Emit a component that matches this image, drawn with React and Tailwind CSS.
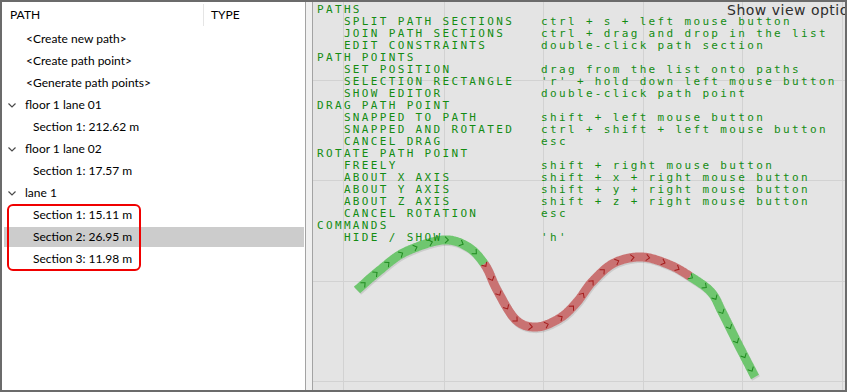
import React from "react";

const KEY_PTS = [
  [357, 290], [380, 270], [405, 252], [443, 240], [468, 247], [485, 265],
  [497, 290], [516, 320], [537, 327], [560, 318], [577, 302], [592, 282],
  [614, 263], [642, 257], [670, 265], [691, 277], [711, 292], [722, 312],
  [738, 344], [755, 377],
].map(([x, y]) => [x - 313, y - 2]);

function sampleCurve() {
  const n = KEY_PTS.length;
  const out = [];
  const steps = 24;
  for (let i = 0; i < n - 1; i++) {
    const p0 = KEY_PTS[Math.max(i - 1, 0)];
    const p1 = KEY_PTS[i];
    const p2 = KEY_PTS[i + 1];
    const p3 = KEY_PTS[Math.min(i + 2, n - 1)];
    for (let s = 0; s <= steps; s++) {
      if (s === steps && i < n - 2) continue;
      const t = s / steps;
      const t2 = t * t;
      const t3 = t2 * t;
      const f = (a, b, c, d) =>
        0.5 * (2 * b + (-a + c) * t + (2 * a - 5 * b + 4 * c - d) * t2 + (-a + 3 * b - 3 * c + d) * t3);
      out.push({ x: f(p0[0], p1[0], p2[0], p3[0]), y: f(p0[1], p1[1], p2[1], p3[1]), seg: i });
    }
  }
  return out;
}

function colorOf(seg) {
  return seg >= 5 && seg < 15 ? "red" : "green";
}

function Curve() {
  const pts = sampleCurve();
  const runs = [];
  let cur = null;
  pts.forEach((p, idx) => {
    const c = colorOf(p.seg);
    if (!cur || cur.c !== c) {
      const prev = idx > 0 ? pts[idx - 1] : null;
      cur = { c, pts: prev ? [prev] : [] };
      runs.push(cur);
    }
    cur.pts.push(p);
  });
  const chevrons = [];
  let acc = 8;
  for (let i = 1; i < pts.length; i++) {
    const a = pts[i - 1];
    const b = pts[i];
    const d = Math.hypot(b.x - a.x, b.y - a.y);
    acc -= d;
    if (acc <= 0) {
      acc += 16;
      const ang = (Math.atan2(b.y - a.y, b.x - a.x) * 180) / Math.PI;
      chevrons.push({ x: b.x, y: b.y, ang, c: colorOf(b.seg) });
    }
  }
  const toStr = (arr) => arr.map((p) => `${p.x.toFixed(1)},${p.y.toFixed(1)}`).join(" ");
  return (
    <g>
      <polyline points={toStr(pts.map((p) => ({ x: p.x + 1, y: p.y + 1.5 })))} fill="none" stroke="rgba(0,0,0,0.10)" strokeWidth="9" />
      {runs.map((r, i) => (
        <polyline
          key={i}
          points={toStr(r.pts)}
          fill="none"
          stroke={r.c === "red" ? "#c97272" : "#6fc66f"}
          strokeWidth="9"
          strokeLinejoin="round"
        />
      ))}
      {chevrons.map((c, i) => (
        <path
          key={i}
          d="M-1.8,-3.2 L1.6,0 L-1.8,3.2"
          transform={`translate(${c.x.toFixed(1)},${c.y.toFixed(1)}) rotate(${c.ang.toFixed(1)})`}
          fill="none"
          stroke={c.c === "red" ? "#a51c1c" : "#1f8a1f"}
          strokeWidth="1"
        />
      ))}
    </g>
  );
}

const HELP = [
  ["PATHS"],
  ["   SPLIT PATH SECTIONS", "ctrl + s + left mouse button"],
  ["   JOIN PATH SECTIONS", "ctrl + drag and drop in the list"],
  ["   EDIT CONSTRAINTS", "double-click path section"],
  ["PATH POINTS"],
  ["   SET POSITION", "drag from the list onto paths"],
  ["   SELECTION RECTANGLE", "'r' + hold down left mouse button"],
  ["   SHOW EDITOR", "double-click path point"],
  ["DRAG PATH POINT"],
  ["   SNAPPED TO PATH", "shift + left mouse button"],
  ["   SNAPPED AND ROTATED", "ctrl + shift + left mouse button"],
  ["   CANCEL DRAG", "esc"],
  ["ROTATE PATH POINT"],
  ["   FREELY", "shift + right mouse button"],
  ["   ABOUT X AXIS", "shift + x + right mouse button"],
  ["   ABOUT Y AXIS", "shift + y + right mouse button"],
  ["   ABOUT Z AXIS", "shift + z + right mouse button"],
  ["   CANCEL ROTATION", "esc"],
  ["COMMANDS"],
  ["   HIDE / SHOW", "'h'"],
];

function Viewport() {
  const vx = [30, 131, 230, 330, 429, 529];
  const hy = [78, 178, 279, 379];
  const text = HELP.map(([a, b]) => (b ? a.padEnd(25, " ") + b : a)).join("\n");
  return (
    <div className="relative flex-1 bg-[#e4e4e4] overflow-hidden">
      <svg className="absolute inset-0" width="532" height="388">
        {vx.map((x) => (
          <line key={"v" + x} x1={x + 0.5} y1="0" x2={x + 0.5} y2="388" stroke="#d2d2d2" strokeWidth="1" />
        ))}
        {hy.map((y) => (
          <line key={"h" + y} x1="0" y1={y + 0.5} x2="532" y2={y + 0.5} stroke="#d2d2d2" strokeWidth="1" />
        ))}
        <Curve />
      </svg>
      <pre className="relative m-0 pl-[4px] pt-[2px] font-['DejaVu_Sans_Mono',monospace] text-[11px] leading-[12px] tracking-[2.34px] text-[#138c13] whitespace-pre">
        {text}
      </pre>
      <div className="absolute left-[414px] top-[0px] whitespace-nowrap font-['DejaVu_Sans',sans-serif] text-[14px] leading-[17px] tracking-[0.5px] text-[#2e2e2e]">
        Show view options
      </div>
    </div>
  );
}

function Chevron() {
  return (
    <svg width="8" height="5" viewBox="0 0 8 5" className="block">
      <path d="M0.5,0.5 L4,4 L7.5,0.5" fill="none" stroke="#4a4a4a" strokeWidth="1.2" />
    </svg>
  );
}

function Row({ indent, chevron, selected, children }) {
  return (
    <div className="h-[22px] flex items-center relative">
      {selected && <div className="absolute left-[2px] right-[1px] top-[1px] bottom-[1px] bg-[#cccccc]" />}
      {chevron && (
        <div className="absolute left-[6px] top-[9px]">
          <Chevron />
        </div>
      )}
      <div className="relative" style={{ paddingLeft: indent }}>
        <span className="whitespace-nowrap">{children}</span>
      </div>
    </div>
  );
}

function LeftPanel() {
  return (
    <div className="relative w-[303px] bg-white font-['Lato',sans-serif] text-[12px] text-black">
      <div className="h-[26px] flex items-center">
        <div className="w-[201px] pl-[8px]">PATH</div>
        <div className="w-px h-[22px] bg-[#e5e5e5]" />
        <div className="pl-[7px]">TYPE</div>
      </div>
      <Row indent={24}>&lt;Create new path&gt;</Row>
      <Row indent={24}>&lt;Create path point&gt;</Row>
      <Row indent={24}>&lt;Generate path points&gt;</Row>
      <Row indent={23} chevron>floor 1 lane 01</Row>
      <Row indent={31}>Section 1: 212.62 m</Row>
      <Row indent={23} chevron>floor 1 lane 02</Row>
      <Row indent={31}>Section 1: 17.57 m</Row>
      <Row indent={23} chevron>lane 1</Row>
      <Row indent={31}>Section 1: 15.11 m</Row>
      <Row indent={31} selected>Section 2: 26.95 m</Row>
      <Row indent={31}>Section 3: 11.98 m</Row>
      <div className="absolute left-[5px] top-[202px] w-[134px] h-[67px] border-[2.5px] border-[#f00000] rounded-[6px]" />
    </div>
  );
}

export default function App() {
  return (
    <div className="w-[847px] h-[392px] flex border-2 border-[#6b6b6b] bg-white overflow-hidden">
      <LeftPanel />
      <div className="w-px bg-[#a3a3a3]" />
      <div className="w-[6px] bg-[#f0f0f0]" />
      <div className="w-px bg-[#a3a3a3]" />
      <Viewport />
    </div>
  );
}
